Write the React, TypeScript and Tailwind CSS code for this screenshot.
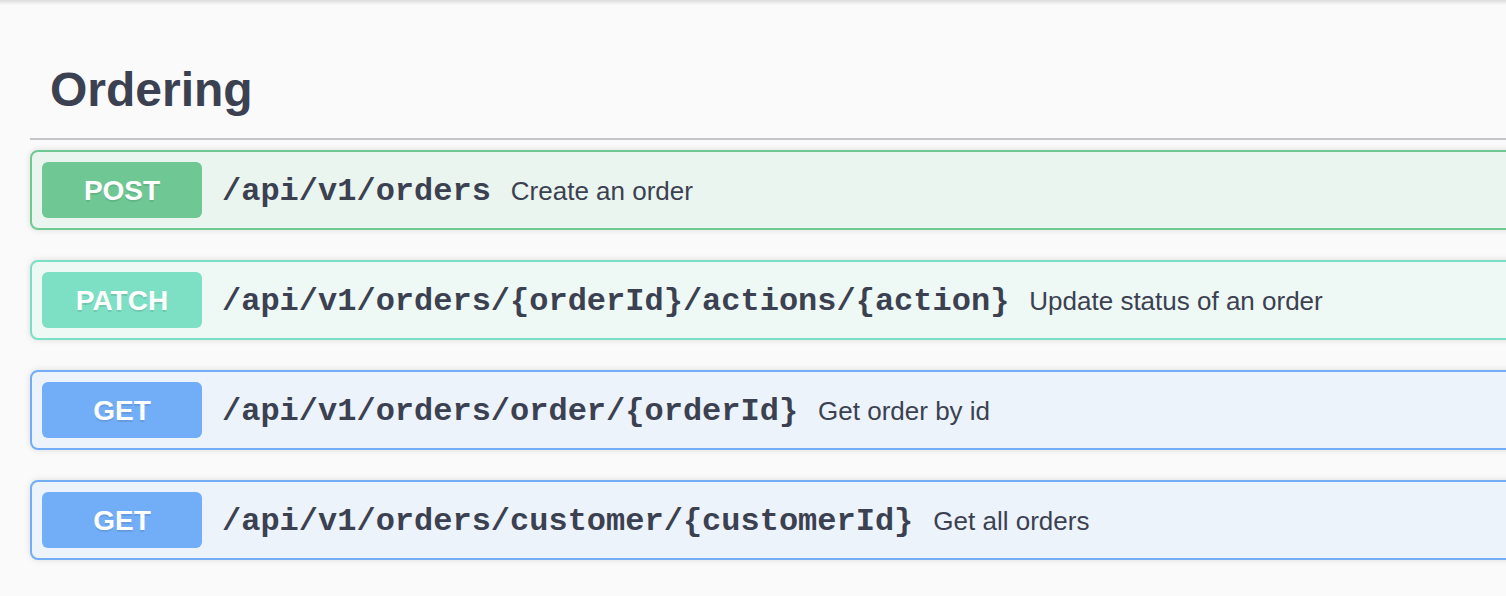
import React from "react";

type Op = {
  method: string;
  path: string;
  summary: string;
  badge: string;
  border: string;
  bg: string;
};

const ops: Op[] = [
  {
    method: "POST",
    path: "/api/v1/orders",
    summary: "Create an order",
    badge: "bg-[#6fc894]",
    border: "border-[#70c993]",
    bg: "bg-[#ebf5ef]",
  },
  {
    method: "PATCH",
    path: "/api/v1/orders/{orderId}/actions/{action}",
    summary: "Update status of an order",
    badge: "bg-[#7ddfc3]",
    border: "border-[#7ae0c5]",
    bg: "bg-[#eef8f5]",
  },
  {
    method: "GET",
    path: "/api/v1/orders/order/{orderId}",
    summary: "Get order by id",
    badge: "bg-[#72aef8]",
    border: "border-[#72adf6]",
    bg: "bg-[#ecf3fb]",
  },
  {
    method: "GET",
    path: "/api/v1/orders/customer/{customerId}",
    summary: "Get all orders",
    badge: "bg-[#72aef8]",
    border: "border-[#72adf6]",
    bg: "bg-[#ecf3fb]",
  },
];

export default function App() {
  return (
    <div className="min-h-screen bg-[#fafafa] overflow-hidden font-['Liberation_Sans',Arial,sans-serif] text-[#3b4151]">
      {/* top bar shadow */}
      <div className="h-[5px] bg-gradient-to-b from-[#dcdcdc] to-[#fafafa]" />

      <div className="ml-[30px] w-[1600px]">
        <h3 className="pt-[61px] pb-[24px] pl-[20px] text-[48px] leading-[48px] font-bold border-b-2 border-[#c4c5c9]">
          Ordering
        </h3>

        <div className="mt-[10px] flex flex-col gap-[30px]">
          {ops.map((op) => (
            <div
              key={op.path}
              className={`flex items-center p-[10px] rounded-[8px] border-2 shadow-[0_0_6px_rgba(0,0,0,0.12)] ${op.border} ${op.bg}`}
            >
              <span
                className={`w-[160px] h-[56px] shrink-0 flex items-center justify-center pt-[2px] rounded-[6px] text-white text-[28px] font-bold [text-shadow:0_2px_0_rgba(0,0,0,0.1)] ${op.badge}`}
              >
                {op.method}
              </span>
              <span className="pl-[20px] pr-[20px] pt-[3px] font-['Liberation_Mono','Courier_New',monospace] font-bold text-[32px] leading-none">
                {op.path}
              </span>
              <span className="pt-[2px] text-[26px] leading-none">{op.summary}</span>
            </div>
          ))}
        </div>
      </div>
    </div>
  );
}
